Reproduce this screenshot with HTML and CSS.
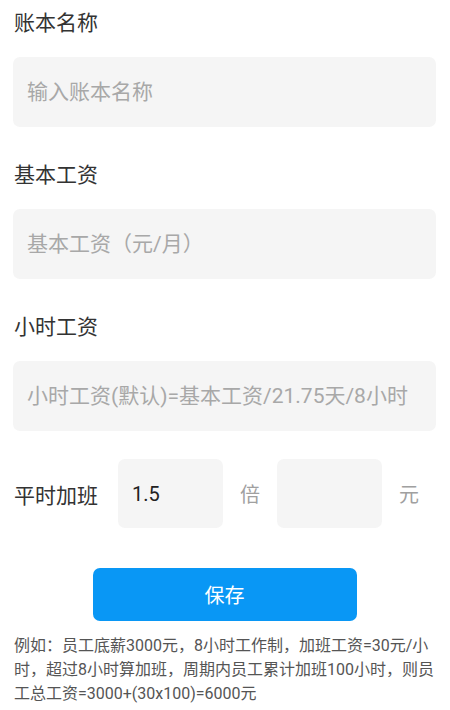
FILE: index.html
```html
<!DOCTYPE html>
<html lang="zh-CN">
<head>
    <meta charset="UTF-8">
    <meta name="viewport" content="width=device-width, initial-scale=1.0">
    <title>账本设置</title>
    <link rel="stylesheet" href="styles.css">
</head>
<body>
    <div class="field">
        <label class="field-label" for="name">账本名称</label>
        <input class="field-input" type="text" id="name" placeholder="输入账本名称">
    </div>

    <div class="field">
        <label class="field-label" for="salary">基本工资</label>
        <input class="field-input" type="text" id="salary" placeholder="基本工资（元/月）">
    </div>

    <div class="field field-last">
        <label class="field-label" for="hourly">小时工资</label>
        <input class="field-input" type="text" id="hourly" placeholder="小时工资(默认)=基本工资/21.75天/8小时">
    </div>

    <div class="overtime">
        <span class="overtime-label">平时加班</span>
        <input class="small-input" type="text" value="1.5">
        <span class="unit">倍</span>
        <input class="small-input" type="text">
        <span class="unit">元</span>
    </div>

    <button class="save-btn" type="button">保存</button>

    <p class="note">例如：员工底薪3000元，8小时工作制，加班工资=30元/小时，超过8小时算加班，周期内员工累计加班100小时，则员工总工资=3000+(30x100)=6000元</p>
</body>
</html>
```

FILE: styles.css
```css
body {
    font-family: Roboto, "Noto Sans CJK SC", sans-serif;
    background: #fff;
    color: #333;
    margin: 0;
    padding: 0 14px 0 13px;
}

.field {
    margin-bottom: 25px;
}

.field-last {
    margin-bottom: 28px;
}

.field-label {
    display: block;
    font-size: 21px;
    line-height: 46px;
    margin-bottom: 11px;
    padding-left: 1px;
}

.field-input {
    display: block;
    box-sizing: border-box;
    width: 100%;
    height: 70px;
    border: none;
    border-radius: 7px;
    background: #f5f5f5;
    padding: 0 14px;
    font-family: inherit;
    font-size: 21px;
    color: #222;
    outline: none;
}

.field-input::placeholder,
.small-input::placeholder {
    color: #a8a8a8;
}

.overtime {
    display: flex;
    align-items: center;
    height: 69px;
}

.overtime-label {
    font-size: 21px;
    width: 106px;
    padding-left: 1px;
}

.small-input {
    box-sizing: border-box;
    width: 105px;
    height: 69px;
    border: none;
    border-radius: 7px;
    background: #f5f5f5;
    padding: 0 14px;
    font-family: inherit;
    font-size: 20px;
    color: #222;
    outline: none;
}

.unit {
    font-size: 20px;
    color: #a0a0a0;
    margin: 0 17px;
}

.save-btn {
    display: block;
    width: 264px;
    height: 53px;
    margin: 40px auto 0;
    border: none;
    border-radius: 7px;
    background: #0997f5;
    color: #fff;
    font-family: inherit;
    font-size: 20px;
    cursor: pointer;
}

.note {
    margin: 13px 0 0 1px;
    font-size: 16px;
    line-height: 24px;
    color: #555;
}
```
